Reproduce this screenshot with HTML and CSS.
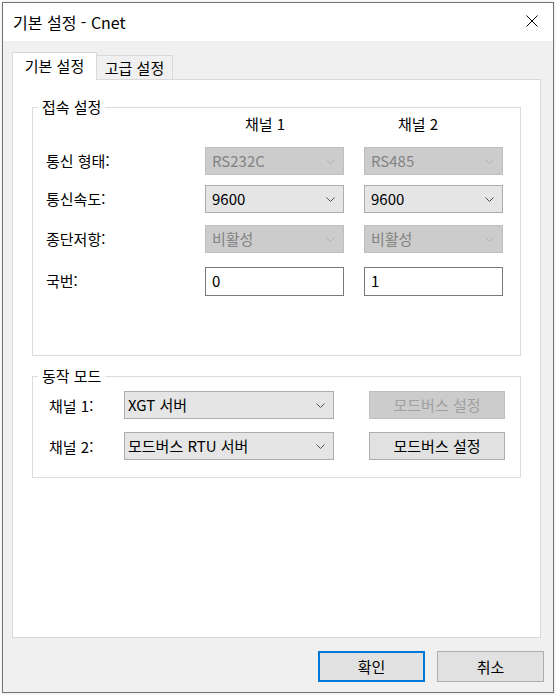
FILE: index.html
```html
<!DOCTYPE html>
<html lang="ko">
<head>
<meta charset="utf-8">
<title>기본 설정 - Cnet</title>
<link rel="stylesheet" href="styles.css">
</head>
<body>
<div class="window">
  <div class="titlebar">
    <span class="title">기본 설정 - Cnet</span>
    <svg class="close" width="12" height="12" viewBox="0 0 12 12"><path d="M0.5 0.5 L11.5 11.5 M11.5 0.5 L0.5 11.5" stroke="#000" stroke-width="1" fill="none"/></svg>
  </div>
  <div class="client">
    <div class="tabs">
      <div class="tab active">기본 설정</div>
      <div class="tab">고급 설정</div>
    </div>
    <div class="panel">
      <div class="group group-conn">
        <div class="group-title">접속 설정</div>
        <div class="conn-grid">
          <div></div>
          <div class="colhead colhead1">채널 1</div>
          <div class="colhead colhead2">채널 2</div>

          <div class="label">통신 형태:</div>
          <div class="combo disabled"><span>RS232C</span><svg width="9" height="5" viewBox="0 0 9 5"><polyline points="0.5,0.5 4.5,4.5 8.5,0.5" fill="none" stroke="#b3b3b3"/></svg></div>
          <div class="combo disabled"><span>RS485</span><svg width="9" height="5" viewBox="0 0 9 5"><polyline points="0.5,0.5 4.5,4.5 8.5,0.5" fill="none" stroke="#b3b3b3"/></svg></div>

          <div class="label">통신속도:</div>
          <div class="combo"><span>9600</span><svg width="9" height="5" viewBox="0 0 9 5"><polyline points="0.5,0.5 4.5,4.5 8.5,0.5" fill="none" stroke="#505050"/></svg></div>
          <div class="combo"><span>9600</span><svg width="9" height="5" viewBox="0 0 9 5"><polyline points="0.5,0.5 4.5,4.5 8.5,0.5" fill="none" stroke="#505050"/></svg></div>

          <div class="label">종단저항:</div>
          <div class="combo disabled"><span>비활성</span><svg width="9" height="5" viewBox="0 0 9 5"><polyline points="0.5,0.5 4.5,4.5 8.5,0.5" fill="none" stroke="#b3b3b3"/></svg></div>
          <div class="combo disabled"><span>비활성</span><svg width="9" height="5" viewBox="0 0 9 5"><polyline points="0.5,0.5 4.5,4.5 8.5,0.5" fill="none" stroke="#b3b3b3"/></svg></div>

          <div class="label">국번:</div>
          <div class="textbox">0</div>
          <div class="textbox">1</div>
        </div>
      </div>

      <div class="group group-mode">
        <div class="group-title">동작 모드</div>
        <div class="mode-grid">
          <div class="label">채널 1:</div>
          <div class="combo combo-wide"><span>XGT 서버</span><svg width="9" height="5" viewBox="0 0 9 5"><polyline points="0.5,0.5 4.5,4.5 8.5,0.5" fill="none" stroke="#505050"/></svg></div>
          <div class="btn btn-disabled">모드버스 설정</div>

          <div class="label">채널 2:</div>
          <div class="combo combo-wide"><span>모드버스 RTU 서버</span><svg width="9" height="5" viewBox="0 0 9 5"><polyline points="0.5,0.5 4.5,4.5 8.5,0.5" fill="none" stroke="#505050"/></svg></div>
          <div class="btn">모드버스 설정</div>
        </div>
      </div>
    </div>
    <div class="footer">
      <div class="btn btn-footer btn-default">확인</div>
      <div class="btn btn-footer">취소</div>
    </div>
  </div>
</div>
</body>
</html>
```
FILE: styles.css
```css
* { box-sizing: border-box; }
html, body { margin: 0; padding: 0; background: #ffffff; }
body {
  font-family: "Noto Sans CJK KR", "Noto Sans", sans-serif;
  font-size: 15px;
  color: #000;
  width: 557px;
  height: 695px;
  overflow: hidden;
}
.window {
  margin: 2px 0 0 2px;
  width: 552px;
  height: 691px;
  border: 1px solid #737373;
  display: flex;
  flex-direction: column;
  background: #f0f0f0;
  box-shadow: 0 0 3px rgba(0,0,0,0.15);
}
.titlebar {
  height: 38px;
  flex: none;
  background: #ffffff;
  display: flex;
  align-items: center;
  justify-content: space-between;
  padding: 0 15px 0 10px;
}
.title { font-size: 16px; line-height: 20px; margin-top: -1px; }
.close { display: block; margin-top: -2px; }
.client {
  flex: 1;
  display: flex;
  flex-direction: column;
  padding: 11px 11px 0 9px;
}
.tabs {
  display: flex;
  align-items: flex-end;
  height: 28px;
  margin-bottom: -1px;
  position: relative;
  z-index: 1;
}
.tab {
  height: 24px;
  margin-bottom: 1px;
  width: 76px;
  border: 1px solid #d9d9d9;
  border-left: none;
  border-bottom: none;
  background: #f0f0f0;
  display: flex;
  align-items: center;
  justify-content: center;
  line-height: 20px;
}
.tab.active {
  height: 28px;
  margin-bottom: 0;
  width: 85px;
  border-left: 1px solid #d9d9d9;
  background: #ffffff;
  padding-bottom: 2px;
}
.panel {
  height: 559px;
  width: 529px;
  border: 1px solid #d9d9d9;
  background: #ffffff;
  padding: 27px 0 0 19px;
}
.group {
  border: 1px solid #dcdcdc;
  width: 489px;
}
.group-title {
  display: inline-block;
  height: 20px;
  line-height: 20px;
  margin: -11px 0 0 5px;
  padding: 0 4px;
  background: #ffffff;
  vertical-align: top;
}
.group-conn { height: 249px; }
.group-mode { height: 102px; margin-top: 20px; }

.conn-grid {
  display: grid;
  grid-template-columns: 139px 139px 139px;
  column-gap: 20px;
  grid-template-rows: 33px 38px 40px 42px 29px;
  padding: 0 0 0 13px;
  margin-top: -15px;
}
.colhead { line-height: 20px; height: 20px; }
.colhead1 { padding-left: 40px; }
.colhead2 { padding-left: 34px; }
.label {
  height: 28px;
  line-height: 28px;
}
.combo {
  height: 28px;
  border: 1px solid #adadad;
  background: #e5e5e5;
  display: flex;
  align-items: center;
  justify-content: space-between;
  padding: 0 8px 0 6px;
  line-height: 20px;
}
.combo span { padding-bottom: 1px; }
.combo.disabled {
  background: #cccccc;
  border-color: #bfbfbf;
  color: #838383;
}
.textbox {
  height: 29px;
  border: 1px solid #7a7a7a;
  background: #ffffff;
  padding: 0 6px;
  line-height: 26px;
}
.mode-grid {
  display: grid;
  grid-template-columns: 75px 210px 171px;
  column-gap: 0;
  grid-template-rows: 41px 29px;
  padding: 0 0 0 16px;
  margin-top: -7px;
}
.mode-grid .btn { margin-left: 35px; }
.mode-grid .label { height: 29px; line-height: 30px; }
.combo-wide { padding-left: 3px; padding-right: 8px; }
.btn {
  height: 28px;
  border: 1px solid #adadad;
  background: #e1e1e1;
  display: flex;
  align-items: center;
  justify-content: center;
  line-height: 20px;
}
.btn-disabled {
  background: #cccccc;
  border-color: #bfbfbf;
  color: #a0a0a0;
}
.footer {
  display: flex;
  justify-content: flex-end;
  gap: 12px;
  margin-top: 13px;
  margin-right: -2px;
}
.btn-footer { width: 107px; height: 31px; }
.btn-default { border: 2px solid #0078d7; }
```
